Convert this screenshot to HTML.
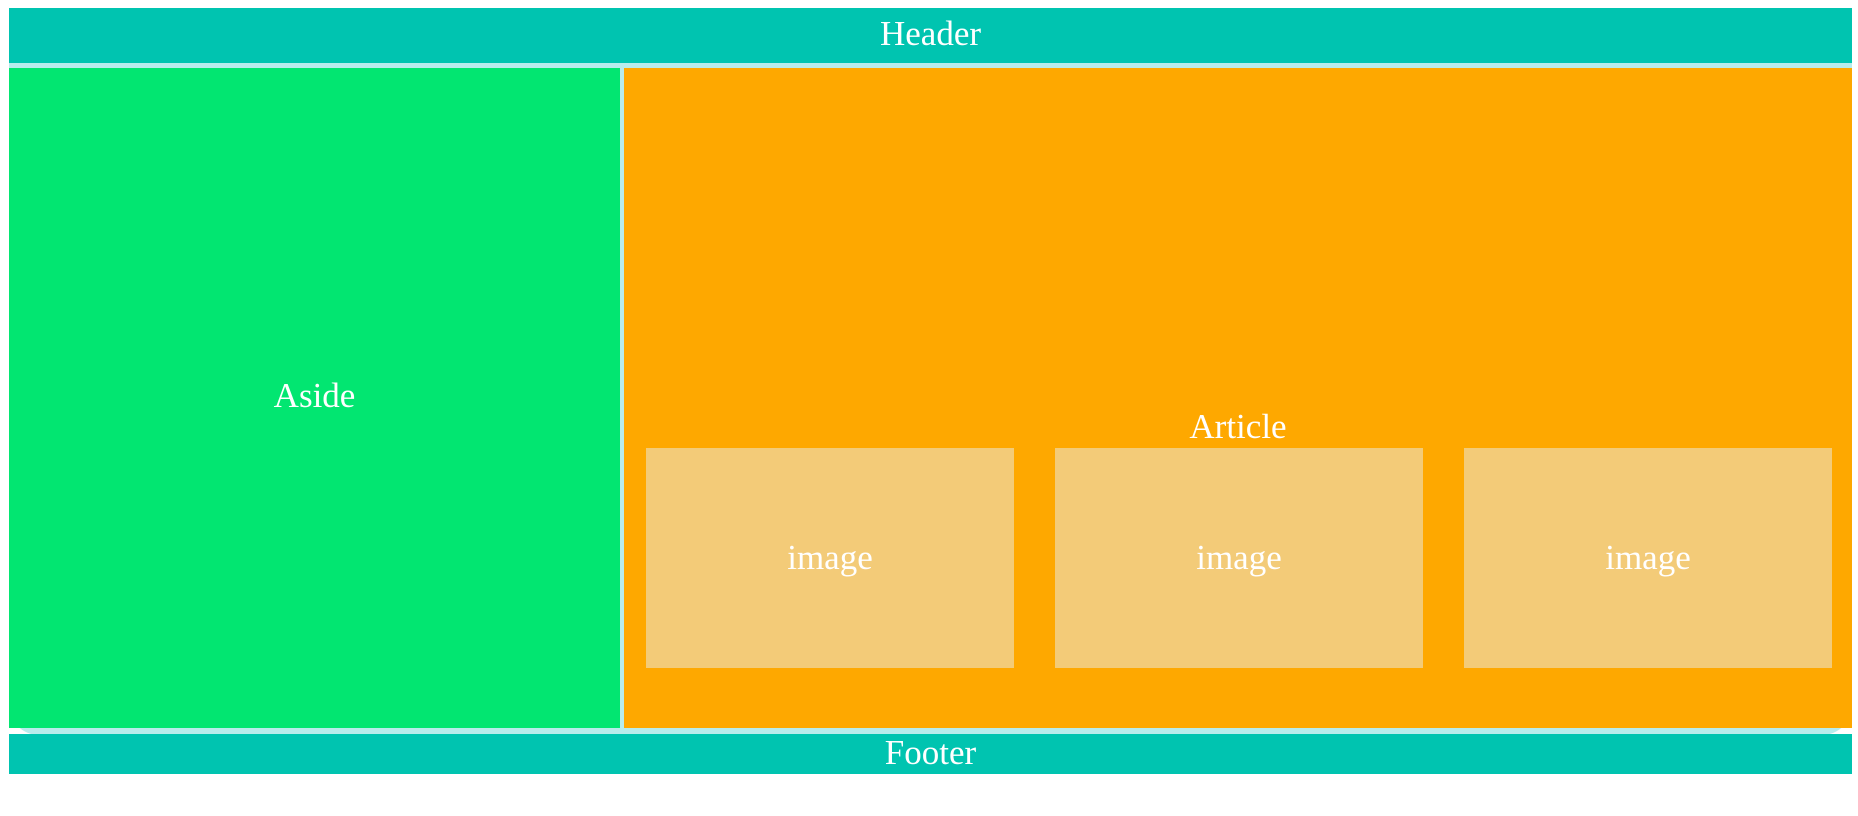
<!DOCTYPE html>
<html><head><style>
body{margin:0;width:1858px;height:816px;background:#fff;position:relative;overflow:hidden;font-family:"Liberation Serif",serif;color:#fff;font-size:35px}
div{position:absolute;display:flex;align-items:center;justify-content:center}
</style></head><body>
<div style="left:9px;top:8px;width:1843px;height:55px;background:#00c4b0;padding-bottom:4px;box-sizing:border-box">Header</div>
<div style="left:9px;top:63px;width:1843px;height:672px;background:#b8ecec;border-radius:0 0 30px 30px"></div>
<div style="left:9px;top:68px;width:611px;height:660px;background:#02e671;padding-bottom:4px;box-sizing:border-box">Aside</div>
<div style="left:624px;top:68px;width:1228px;height:660px;background:#fea800"></div>
<div style="left:624px;top:405px;width:1228px;height:44px">Article</div>
<div style="left:646px;top:448px;width:368px;height:220px;background:#f3cb78">image</div>
<div style="left:1055px;top:448px;width:368px;height:220px;background:#f3cb78">image</div>
<div style="left:1464px;top:448px;width:368px;height:220px;background:#f3cb78">image</div>
<div style="left:9px;top:734px;width:1843px;height:40px;background:#00c4b0;padding-bottom:3px;box-sizing:border-box">Footer</div>
</body></html>
